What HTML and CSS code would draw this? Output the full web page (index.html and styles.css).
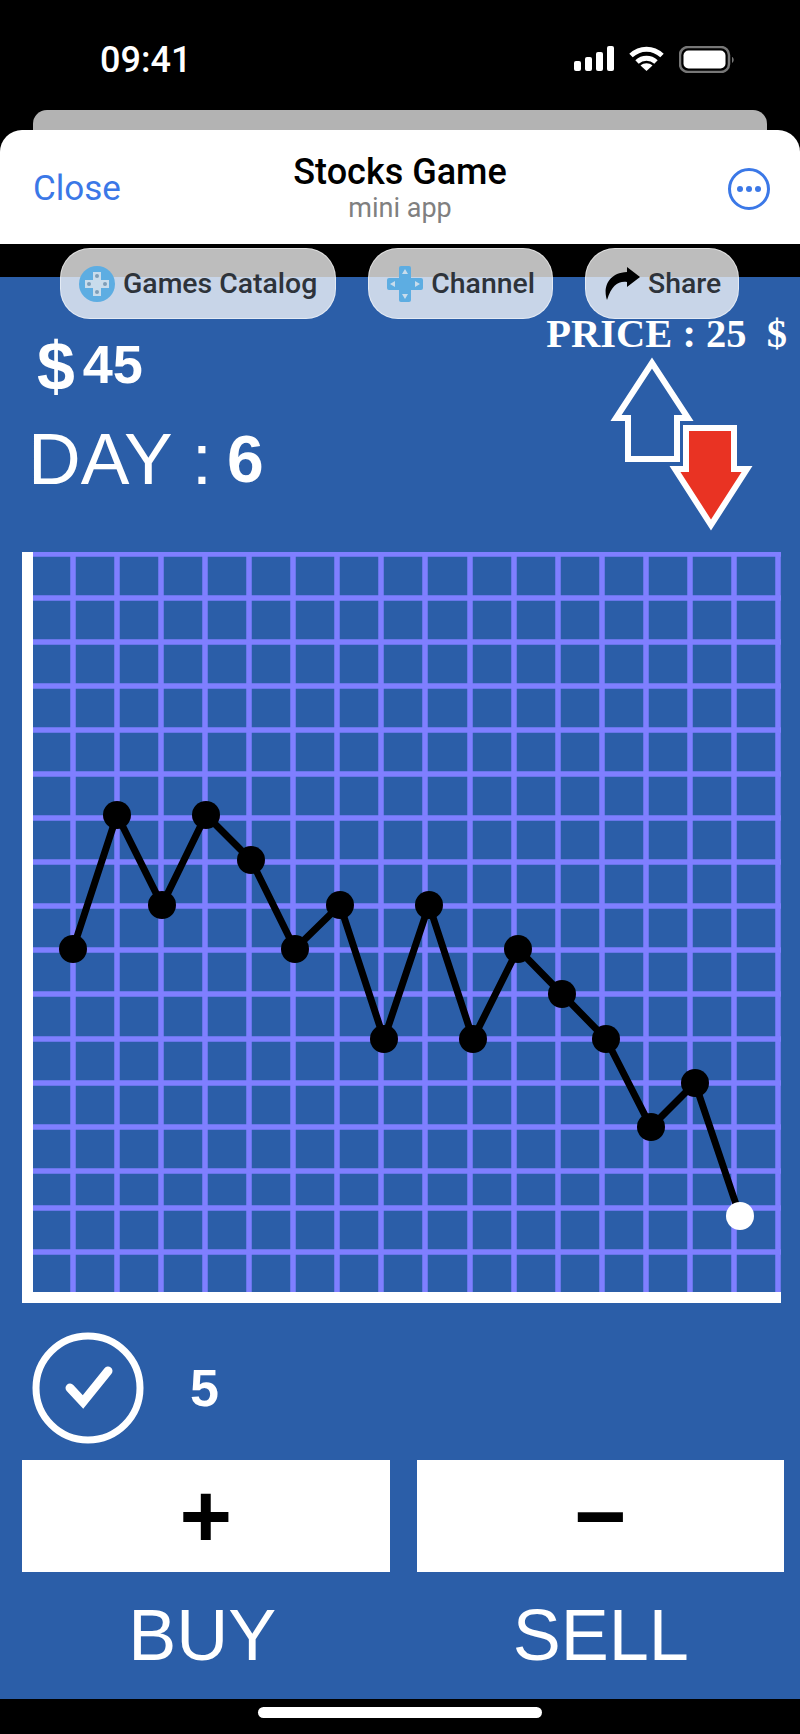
FILE: index.html
```html
<!DOCTYPE html>
<html lang="en">
<head>
    <meta charset="UTF-8">
    <meta name="viewport" content="width=device-width, initial-scale=1.0">
    <title>Stocks Game</title>
    <link rel="stylesheet" href="styles.css">
</head>
<body>
    <div class="status-bar">
        <span class="time">09:41</span>
        <div class="status-icons">
            <svg width="40" height="26" viewBox="0 0 40 26" fill="#fff">
                <rect x="0" y="15" width="7" height="10" rx="2"/>
                <rect x="11" y="11" width="7" height="14" rx="2"/>
                <rect x="22" y="6" width="7" height="19" rx="2"/>
                <rect x="33" y="0" width="7" height="25" rx="2"/>
            </svg>
            <svg width="35" height="26" viewBox="0 0 35 26" fill="none" stroke="#fff" stroke-width="5">
                <path d="M2 9.5C11 1 24 1 33 9.5"/>
                <path d="M8 16C13.500 11 21.500 11 27 16"/>
                <path d="M17.500 25L11.500 19.500C15 16.500 20 16.500 23.500 19.500Z" fill="#fff" stroke="none"/>
            </svg>
            <svg width="56" height="27" viewBox="0 0 56 27">
                <rect x="1" y="1" width="49" height="25" rx="8" fill="none" stroke="#777" stroke-width="2.500"/>
                <rect x="4.500" y="4.500" width="42" height="18" rx="5" fill="#fff"/>
                <path d="M53 11C55 11.500 55.500 15.500 53 17Z" fill="#777"/>
            </svg>
        </div>
    </div>

    <div class="backdrop"></div>

    <header class="sheet-header">
        <a class="close-link">Close</a>
        <div class="sheet-title">
            <h1>Stocks Game</h1>
            <p>mini app</p>
        </div>
        <svg class="more-icon" width="44" height="44" viewBox="0 0 44 44">
            <circle cx="22" cy="22" r="19.500" fill="none" stroke="#3b78e7" stroke-width="3"/>
            <circle cx="13" cy="22" r="3" fill="#3b78e7"/>
            <circle cx="22" cy="22" r="3" fill="#3b78e7"/>
            <circle cx="31" cy="22" r="3" fill="#3b78e7"/>
        </svg>
    </header>

    <main class="game">
        <nav class="pills">
            <a class="pill pill-games">
                <svg width="36" height="36" viewBox="0 0 36 36">
                    <circle cx="18" cy="18" r="18" fill="#5dade2"/>
                    <path d="M14 6H22V14H30V22H22V30H14V22H6V14H14Z" fill="#c8dcec"/>
                    <circle cx="18" cy="10" r="2" fill="#7d9db8"/>
                    <circle cx="18" cy="26" r="2" fill="#7d9db8"/>
                    <circle cx="10" cy="18" r="2" fill="#7d9db8"/>
                    <circle cx="26" cy="18" r="2" fill="#7d9db8"/>
                </svg>
                Games Catalog
            </a>
            <a class="pill pill-channel">
                <svg width="36" height="36" viewBox="0 0 36 36">
                    <path d="M12 2a2 2 0 0 1 2-2H22a2 2 0 0 1 2 2V12H34a2 2 0 0 1 2 2V22a2 2 0 0 1-2 2H24V34a2 2 0 0 1-2 2H14a2 2 0 0 1-2-2V24H2a2 2 0 0 1-2-2V14a2 2 0 0 1 2-2H12Z" fill="#5dade2"/>
                    <path d="M18 3L21 8H15ZM18 33L15 28H21ZM3 18L8 15V21ZM33 18L28 21V15Z" fill="#c8dcec"/>
                </svg>
                Channel
            </a>
            <a class="pill pill-share">
                <svg width="36" height="34" viewBox="0 0 36 34">
                    <path d="M23 0L36 10L23 20V15C14 14 8 18 3 33C-1 22 3 6 23 5Z" fill="#000"/>
                </svg>
                Share
            </a>
        </nav>

        <section class="game-top">
            <div class="stats">
                <div class="money"><span class="money-sign">$</span><span class="money-value">45</span></div>
                <div class="day"><span class="day-label">DAY :</span><span class="day-value">6</span></div>
            </div>
            <div class="price-box">
                <div class="price">PRICE : 25&nbsp; $</div>
                <svg class="arrows" width="150" height="184" viewBox="0 0 150 184">
                    <path d="M47 13L11 68H23V109H72V68H83Z" fill="none" stroke="#fff" stroke-width="6"/>
                    <path d="M81 78H129V119H142L106 175L70 119H81Z" fill="#e93323" stroke="#fff" stroke-width="6"/>
                </svg>
            </div>
        </section>

        <svg class="chart" width="759" height="751" viewBox="0 0 759 751">
            <path class="grid" d="M51 0V740M95 0V740M139 0V740M183 0V740M227 0V740M271 0V740M315 0V740M359 0V740M403 0V740M448 0V740M492 0V740M536 0V740M580 0V740M624 0V740M668 0V740M712 0V740M756 0V740"/>
            <path class="grid" d="M11 2H759M11 46H759M11 90H759M11 134H759M11 178H759M11 222H759M11 266H759M11 310H759M11 354H759M11 398H759M11 442H759M11 487H759M11 531H759M11 575H759M11 619H759M11 656H759M11 700H759"/>
            <path class="axis" d="M5.500 0V745.500H759"/>
            <polyline class="trend" points="51,397 95,263 140,353 184,263 229,308 273,397 318,353 362,487 407,353 451,487 496,397 540,442 584,487 629,575 673,531 718,664"/>
            <g class="dots">
                <circle cx="51" cy="397" r="14"/>
                <circle cx="95" cy="263" r="14"/>
                <circle cx="140" cy="353" r="14"/>
                <circle cx="184" cy="263" r="14"/>
                <circle cx="229" cy="308" r="14"/>
                <circle cx="273" cy="397" r="14"/>
                <circle cx="318" cy="353" r="14"/>
                <circle cx="362" cy="487" r="14"/>
                <circle cx="407" cy="353" r="14"/>
                <circle cx="451" cy="487" r="14"/>
                <circle cx="496" cy="397" r="14"/>
                <circle cx="540" cy="442" r="14"/>
                <circle cx="584" cy="487" r="14"/>
                <circle cx="629" cy="575" r="14"/>
                <circle cx="673" cy="531" r="14"/>
            </g>
            <circle cx="718" cy="664" r="14" fill="#fff"/>
        </svg>

        <div class="quantity">
            <svg width="112" height="112" viewBox="0 0 112 112">
                <circle cx="56" cy="56" r="52" fill="none" stroke="#fff" stroke-width="7"/>
                <path d="M38 56L51 70L76 39" fill="none" stroke="#fff" stroke-width="9" stroke-linecap="round"/>
            </svg>
            <span class="quantity-value">5</span>
        </div>

        <div class="trade-buttons">
            <button class="trade-btn">+</button>
            <button class="trade-btn">&minus;</button>
        </div>

        <div class="trade-labels">
            <span>BUY</span>
            <span>SELL</span>
        </div>
    </main>

    <div class="home-area">
        <div class="home-bar"></div>
    </div>
</body>
</html>
```
FILE: styles.css
```css
body {
    font-family: 'Liberation Sans', Arial, sans-serif;
    margin: 0;
    padding: 0;
    background-color: #000;
    color: #fff;
}

.status-bar {
    height: 110px;
    box-sizing: border-box;
    padding: 46px 65px 0 100px;
    display: flex;
    justify-content: space-between;
    align-items: flex-start;
}

.time {
    font-family: Roboto, sans-serif;
    font-size: 36px;
    font-weight: 500;
    line-height: 29px;
}

.status-icons {
    display: flex;
    gap: 15px;
}

.backdrop {
    height: 20px;
    margin: 0 33px;
    background: #b3b3b3;
    border-radius: 14px 14px 0 0;
}

.sheet-header {
    height: 114px;
    box-sizing: border-box;
    padding: 0 29px 0 33px;
    display: grid;
    grid-template-columns: 200px 1fr 204px;
    align-items: center;
    background: #fff;
    border-radius: 22px 22px 0 0;
    margin-bottom: 33px;
}

.close-link {
    font-family: Roboto, sans-serif;
    font-size: 35px;
    color: #3b78e7;
    margin-top: 2px;
}

.sheet-title {
    text-align: center;
}

.sheet-title h1 {
    font-family: Roboto, sans-serif;
    font-size: 36px;
    font-weight: 500;
    line-height: 40px;
    margin: 0;
    color: #000;
}

.sheet-title p {
    font-family: Roboto, sans-serif;
    font-size: 27px;
    line-height: 29px;
    margin: 2px 0 0;
    color: #808080;
}

.more-icon {
    justify-self: end;
    margin-top: 4px;
}

.game {
    position: relative;
    height: 1422px;
    background: #2b5ea8;
}

.pills {
    position: absolute;
    top: -29px;
    left: 60px;
    display: flex;
    gap: 32px;
}

.pill {
    height: 71px;
    box-sizing: border-box;
    padding: 0 18px;
    display: flex;
    align-items: center;
    gap: 8px;
    font-family: Roboto, sans-serif;
    font-size: 28.400px;
    font-weight: 500;
    color: #2e333a;
    background: rgba(255, 255, 255, 0.74);
    border: 1.500px solid rgba(255, 255, 255, 0.5);
    border-radius: 30px;
}

.pill-channel {
    padding-right: 17px;
}

.pill-share {
    padding-right: 17px;
}

.game-top {
    height: 275px;
    display: flex;
    justify-content: space-between;
}

.stats {
    padding: 52px 0 0 28px;
}

.money {
    display: flex;
    align-items: center;
    padding-left: 9px;
    height: 74px;
}

.money-sign {
    font-size: 68px;
    font-weight: bold;
    line-height: 74px;
}

.money-value {
    font-size: 54px;
    font-weight: bold;
    margin-left: 8px;
    margin-top: -4px;
}

.day {
    display: flex;
    align-items: center;
    margin-top: 18px;
    height: 76px;
}

.day-label {
    font-size: 73px;
    line-height: 76px;
}

.day-value {
    font-size: 66px;
    font-weight: bold;
    margin-left: 15px;
}

.price-box {
    display: flex;
    flex-direction: column;
    align-items: flex-end;
}

.price {
    font-family: 'Liberation Serif', serif;
    font-size: 40.500px;
    font-weight: bold;
    line-height: 44px;
    margin: 35px 13px 0 0;
    white-space: nowrap;
}

.arrows {
    margin: -6px 45px 0 0;
}

.chart {
    display: block;
    margin-left: 22px;
}

.grid {
    fill: none;
    stroke: #7f7fff;
    stroke-width: 5.500;
}

.axis {
    fill: none;
    stroke: #fff;
    stroke-width: 11;
}

.trend {
    fill: none;
    stroke: #000;
    stroke-width: 7;
}

.quantity {
    display: flex;
    align-items: center;
    padding-left: 32px;
    margin-top: 28px;
    height: 114px;
    gap: 46px;
}

.quantity-value {
    font-size: 52px;
    font-weight: bold;
}

.trade-buttons {
    display: flex;
    gap: 27px;
    padding: 0 16px 0 22px;
    margin-top: 15px;
}

.trade-btn {
    flex: 1;
    height: 112px;
    padding: 0;
    border: none;
    background: #fff;
    color: #000;
    font-family: 'Liberation Sans', Arial, sans-serif;
    font-size: 90px;
    font-weight: bold;
    line-height: 112px;
}

.trade-labels {
    display: flex;
    padding: 0 15px 0 18px;
    gap: 30px;
    margin-top: 27px;
    font-size: 72px;
    line-height: 72px;
    text-align: center;
}

.trade-labels span {
    flex: 1;
}

.home-area {
    height: 35px;
    padding-top: 8px;
    box-sizing: border-box;
}

.home-bar {
    width: 284px;
    height: 11px;
    margin: 0 auto;
    background: #fff;
    border-radius: 6px;
}
```
